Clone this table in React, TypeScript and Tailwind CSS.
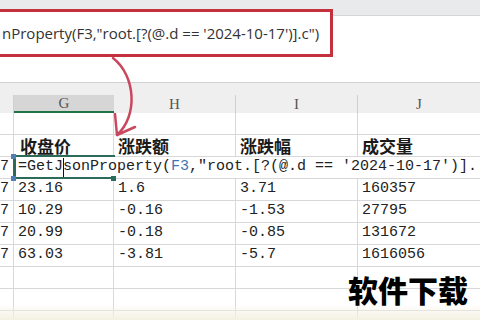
import React from "react";

const mono = "font-['Liberation_Mono',monospace] text-[15px] text-[#222]";
const cjk = "font-['Noto_Sans_CJK_SC',sans-serif]";

type Row = [string, string, string, string];

const rows: Row[] = [
  ["23.16", "1.6", "3.71", "160357"],
  ["10.29", "-0.16", "-1.53", "27795"],
  ["20.99", "-0.18", "-0.85", "131672"],
  ["63.03", "-3.81", "-5.7", "1616056"],
];

const Cell = ({ w, children, className = "" }: { w: string; children?: React.ReactNode; className?: string }) => (
  <div className={`${w} h-full shrink-0 border-r border-[#d8d8d8] flex items-center pl-1 whitespace-nowrap ${className}`}>
    {children}
  </div>
);

const App = () => {
  return (
    <div className="relative w-[480px] h-[320px] overflow-hidden bg-white">
      {/* formula bar area */}
      <div className="h-[16px] bg-[#e8eaeb] border-b border-[#d3d5d7]" />
      <div className="h-[66px] bg-white" />

      {/* column headers */}
      <div className="h-[13px] bg-[#efefef] border-t border-[#d0d0d0]" />
      <div className="h-[18px] flex bg-[#efefef] font-['Liberation_Serif',serif] text-[15px] text-[#555] leading-none">
        <div className="w-[14px] border-r border-[#d0d0d0]" />
        <div className="w-[100px] bg-[#d6d6d6] border-b-2 border-[#217346] flex items-center justify-center">G</div>
        <div className="w-[122px] border-r border-[#d0d0d0] flex items-center justify-center">H</div>
        <div className="w-[122px] border-r border-[#d0d0d0] flex items-center justify-center">I</div>
        <div className="flex-1 flex items-center justify-center">J</div>
      </div>

      {/* empty row */}
      <div className="h-[22px] flex border-b border-[#d8d8d8]">
        <Cell w="w-[14px]" />
        <Cell w="w-[100px]" />
        <Cell w="w-[122px]" />
        <Cell w="w-[122px]" />
      </div>

      {/* titles */}
      <div className={`h-[22px] flex border-b border-[#d8d8d8] ${cjk} text-[17px] leading-[22px] font-bold text-[#1a1a1a]`}>
        <Cell w="w-[14px]" />
        <Cell w="w-[100px]" className="pl-[6px]">收盘价</Cell>
        <Cell w="w-[122px]">涨跌额</Cell>
        <Cell w="w-[122px]">涨跌幅</Cell>
        <div className="flex-1 flex items-center pl-1">成交量</div>
      </div>

      {/* formula being edited, runs past the window edge */}
      <div className={`h-[22px] flex border-b border-[#d8d8d8] ${mono}`}>
        <div className="w-[14px] shrink-0 border-r border-[#d8d8d8] flex items-center justify-end pr-[4px]">7</div>
        <div className="flex-1 flex items-center pl-1 whitespace-nowrap">
          =GetJ
          <span className="inline-block w-px h-[20px] bg-[#111] -mr-px" />
          sonProperty(<span className="text-[#3f74b5]">F3</span>,"root.[?(@.d == '2024-10-17')].
        </div>
      </div>

      {rows.map((r) => (
        <div key={r[0]} className={`h-[22px] flex border-b border-[#d8d8d8] ${mono}`}>
          <div className="w-[14px] shrink-0 border-r border-[#d8d8d8] flex items-center justify-end pr-[4px]">7</div>
          <Cell w="w-[100px]">{r[0]}</Cell>
          <Cell w="w-[122px]">{r[1]}</Cell>
          <Cell w="w-[122px]">{r[2]}</Cell>
          <div className="flex-1 flex items-center pl-1">{r[3]}</div>
        </div>
      ))}

      {[0, 1, 2].map((i) => (
        <div key={i} className="h-[22px] flex border-b border-[#d8d8d8]">
          <Cell w="w-[14px]" />
          <Cell w="w-[100px]" />
          <Cell w="w-[122px]" />
          <Cell w="w-[122px]" />
        </div>
      ))}

      {/* active cell selection */}
      <div className="absolute left-[13px] top-[155px] w-[102px] h-[24px] border-t-2 border-b-2 border-l-[3px] border-[#2c6a5a] border-r-0" />
      <div className="absolute left-[11px] top-[154px] w-[5px] h-[5px] bg-[#4f7fb5]" />
      <div className="absolute left-[11px] top-[176px] w-[5px] h-[5px] bg-[#4f7fb5]" />
      <div className="absolute left-[111px] top-[176px] w-[5px] h-[5px] bg-[#2c6a5a]" />

      {/* callout */}
      <div className="absolute left-[-4px] top-[9px] w-[337px] h-[48px] border-[3px] border-[#c4303c] bg-white flex items-center pl-[3px] font-['Open_Sans',sans-serif] text-[15px] text-[#333] whitespace-nowrap overflow-hidden">
        nProperty(F3,"root.[?(@.d == '2024-10-17')].c")
      </div>

      {/* arrow */}
      <svg className="absolute left-0 top-0 pointer-events-none" width="480" height="320" viewBox="0 0 480 320">
        <path d="M113 58 C136 76 138 116 117 135" fill="none" stroke="#c9485f" strokeWidth="2.5" strokeLinecap="round" />
        <path d="M115 114 L117 135 L135 127" fill="none" stroke="#c9485f" strokeWidth="2.5" strokeLinecap="round" strokeLinejoin="round" />
      </svg>

      {/* bottom tint */}
      <div className="absolute left-0 right-0 bottom-0 h-[16px] bg-gradient-to-b from-transparent to-[#f4f1e2]" />

      {/* watermark */}
      <div className={`absolute right-[12px] top-[274px] ${cjk} text-[30px] font-black leading-none text-black`}>
        软件下载
      </div>
    </div>
  );
};

export default App;
